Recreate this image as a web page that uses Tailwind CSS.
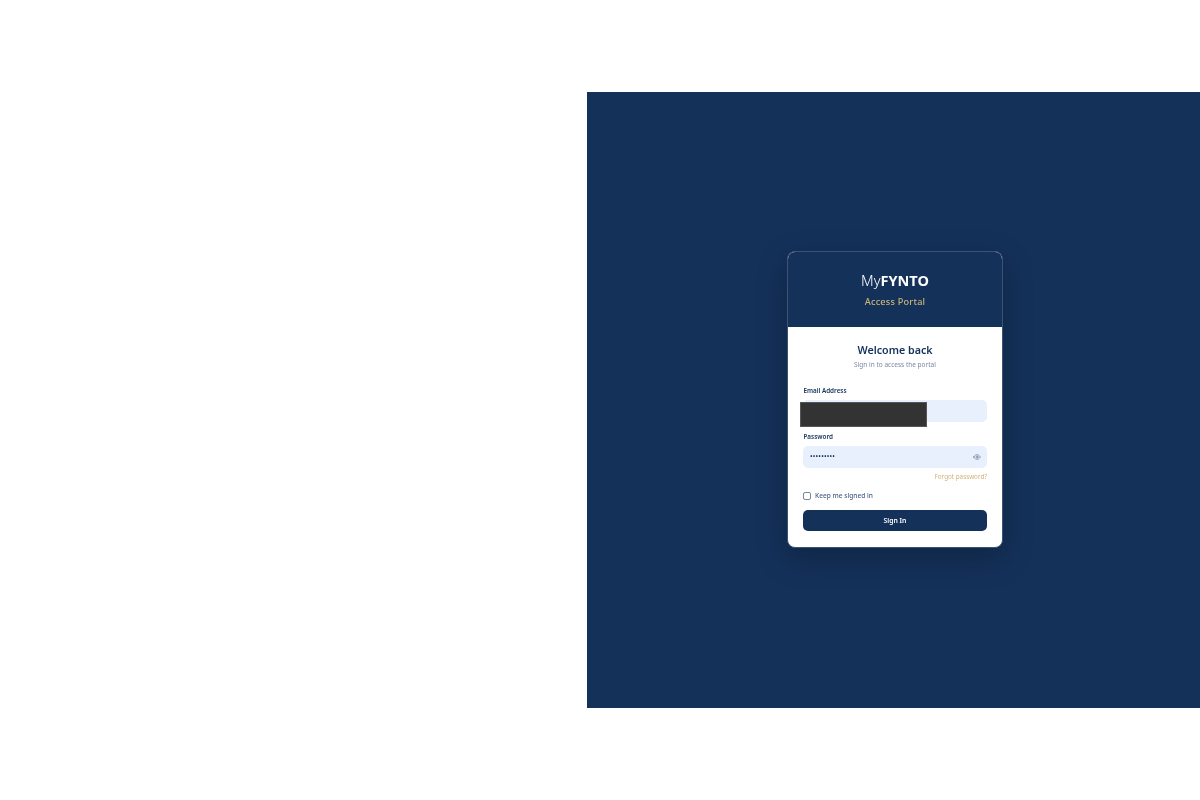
<!DOCTYPE html>
<html>
<head>
<meta charset="utf-8">
<script src="https://cdn.jsdelivr.net/npm/@tailwindcss/browser@4"></script>
</head>
<body class="bg-white antialiased font-['Noto_Sans','Open_Sans',sans-serif]">
<div class="h-[800px] w-[1200px] flex justify-end items-center overflow-hidden">
  <main class="w-[613px] h-[616px] bg-[#14315a] flex items-center justify-center pl-[2px] pb-[2px]">
    <div class="w-[216px] h-[297px] rounded-[8px] overflow-hidden border border-[#3a5478] bg-white shadow-[0_10px_30px_rgba(0,0,0,0.25)] flex flex-col will-change-transform">
      <header class="h-[75px] shrink-0 bg-[#14315a] flex flex-col items-center pt-[18px]">
        <div class="text-[14.5px] leading-[20px] text-white"><span class="font-light">My</span><span class="font-bold">FYNTO</span></div>
        <div class="mt-[4px] text-[9.2px] leading-[16px] font-medium tracking-[0.2px] text-[#c9b27a]">Access Portal</div>
      </header>
      <form class="flex-1 px-[15px] pt-[16px] flex flex-col relative">
        <h1 class="text-center text-[10.7px] leading-[14px] font-semibold text-[#14315a]">Welcome back</h1>
        <p class="mt-[2px] text-center text-[6.5px] leading-[12px] text-[#7a8aa3]">Sign in to access the portal</p>
        <label class="mt-[15px] pl-[0.5px] text-[6.3px] leading-[10px] font-semibold text-[#14315a]">Email Address</label>
        <div class="mt-[4px] h-[22px] rounded-[5px] bg-[#e8f0fe]"></div>
        <div class="absolute left-[12px] top-[75px] w-[127px] h-[25px] bg-[#333333] border border-[#555555]"></div>
        <label class="mt-[10px] pl-[0.5px] text-[6.3px] leading-[10px] font-semibold text-[#14315a]">Password</label>
        <div class="mt-[4px] h-[22px] rounded-[5px] bg-[#e8f0fe] flex items-center justify-between pl-[7px] pr-[5px]">
          <span class="text-[7px] leading-[10px] tracking-[0.15px] font-medium text-[#14315a]">•••••••••</span>
          <svg class="w-[8px] h-[8px] mr-[1px] text-[#5f7390]" viewBox="0 0 24 24" fill="none" stroke="currentColor" stroke-width="2" stroke-linecap="round" stroke-linejoin="round"><path d="M2 12s3.5-7 10-7 10 7 10 7-3.5 7-10 7-10-7-10-7z"/><circle cx="12" cy="12" r="3"/></svg>
        </div>
        <a class="mt-[3px] text-right text-[6.3px] leading-[12px] text-[#cfb27c]">Forgot password?</a>
        <div class="mt-[7px] flex items-center gap-[4px]">
          <span class="w-[8px] h-[8px] rounded-[2px] border border-[#7b8794] bg-white"></span>
          <span class="text-[6.6px] leading-[12px] font-medium text-[#4d6285]">Keep me signed in</span>
        </div>
        <button class="mt-[8px] h-[21px] rounded-[5px] bg-[#14315a] text-white text-[6.8px] font-semibold pt-[1px]">Sign In</button>
      </form>
    </div>
  </main>
</div>
</body>
</html>
